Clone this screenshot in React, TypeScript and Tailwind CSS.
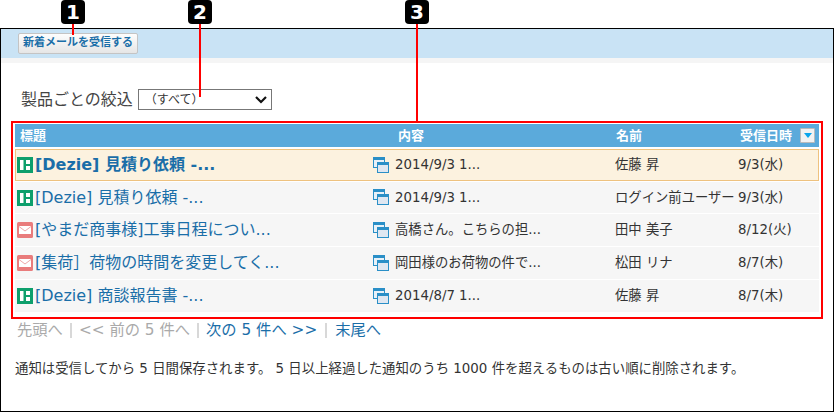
const font = "[font-family:'DejaVu_Sans','Noto_Sans_CJK_JP',sans-serif]";

type Row = {
  icon: "app" | "mail";
  title: string;
  body: string;
  name: string;
  date: string;
};

const rows: Row[] = [
  { icon: "app", title: "[Dezie] 見積り依頼 -...", body: "2014/9/3 1...", name: "佐藤 昇", date: "9/3(水)" },
  { icon: "app", title: "[Dezie] 見積り依頼 -...", body: "2014/9/3 1...", name: "ログイン前ユーザー", date: "9/3(水)" },
  { icon: "mail", title: "[やまだ商事様]工事日程につい...", body: "高橋さん。こちらの担...", name: "田中 美子", date: "8/12(火)" },
  { icon: "mail", title: "[集荷］荷物の時間を変更してく...", body: "岡田様のお荷物の件で...", name: "松田 リナ", date: "8/7(木)" },
  { icon: "app", title: "[Dezie] 商談報告書 -...", body: "2014/8/7 1...", name: "佐藤 昇", date: "8/7(木)" },
];

function AppIcon() {
  return (
    <svg width="16" height="16" viewBox="0 0 16 16" className="shrink-0">
      <rect width="16" height="16" fill="#0d9f6c" />
      <rect x="3" y="3" width="3.5" height="10" fill="#fff" />
      <rect x="9" y="3" width="4" height="4" fill="#fff" />
      <rect x="9" y="9" width="4" height="4" fill="#fff" />
    </svg>
  );
}

function MailIcon() {
  return (
    <svg width="16" height="16" viewBox="0 0 16 16" className="shrink-0">
      <rect width="16" height="16" rx="1.5" fill="#e97c7c" />
      <path d="M2 4h12v8H2z" fill="#fff" />
      <path d="M2 4.5l6 4.5 6-4.5" fill="none" stroke="#f0a8a8" strokeWidth="1" />
    </svg>
  );
}

function WindowIcon() {
  return (
    <svg width="16" height="16" viewBox="0 0 16 16" className="shrink-0">
      <rect x="0.5" y="0.5" width="11" height="10" fill="#e8f1f8" stroke="#2a8fc7" />
      <rect x="0" y="0" width="12" height="3" fill="#2a8fc7" />
      <rect x="4.5" y="5.5" width="11" height="10" fill="#dfe7f1" stroke="#2a8fc7" />
      <rect x="4" y="5" width="12" height="3" fill="#2a8fc7" />
    </svg>
  );
}

function Badge({ n, className }: { n: number; className: string }) {
  return (
    <div className={"absolute top-0 flex flex-col items-center " + className}>
      <div className="flex h-6 w-6 items-center justify-center rounded-[4px] bg-black text-[20px] font-bold leading-none text-white">
        {n}
      </div>
    </div>
  );
}

export default function App() {
  return (
    <div className={"relative h-[412px] w-[834px] overflow-hidden bg-white pt-[28px] text-[#333] " + font}>
      {/* Annotation markers */}
      <Badge n={1} className="left-[61px]" />
      <Badge n={2} className="left-[188px]" />
      <Badge n={3} className="left-[405px]" />
      <div className="absolute left-[72px] top-[24px] h-[11px] w-[2px] bg-[#f00]" />
      <div className="absolute left-[199px] top-[24px] h-[73px] w-[2px] bg-[#f00]" />
      <div className="absolute left-[416px] top-[24px] h-[98px] w-[2px] bg-[#f00]" />

      <div className="flex h-[384px] flex-col border border-b-0 border-black">
        {/* Toolbar */}
        <div className="flex h-[29px] items-start bg-[#c9e3f5] pl-[17px] pt-[4px]">
          <button
            type="button"
            className="flex h-[21px] w-[120px] items-center justify-center whitespace-nowrap rounded-[2px] border border-[#c4c4c4] bg-gradient-to-b from-[#fdfdfd] to-[#e6e6e6] text-[11px] font-bold text-[#1a6ea8]"
          >
            新着メールを受信する
          </button>
        </div>
        <div className="h-[5px] bg-[#f5f5f5]" />

        {/* Filter */}
        <div className="mt-[26px] flex h-[21px] items-center pl-[20px]">
          <span className="text-[16px] text-[#444]">製品ごとの絞込</span>
          <div className="ml-[5px] flex h-[21px] w-[134px] items-center justify-between border border-[#777] bg-white pl-[6px] pr-[4px] text-[12px]">
            <span>（すべて）</span>
            <svg width="12" height="8" viewBox="0 0 12 8">
              <path d="M1 1l5 5 5-5" fill="none" stroke="#111" strokeWidth="2.2" />
            </svg>
          </div>
        </div>

        {/* Notification list */}
        <div className="ml-[10px] mt-[11px] h-[198px] w-[812px] border-2 border-[#f00] px-[2px] pt-[1px]">
          <div className="flex h-[23px] items-center bg-[#5baadb] pr-[4px] text-[13px] font-bold text-white">
            <div className="w-[357px] pl-[5px]">標題</div>
            <div className="w-[243px] pl-[26px]">内容</div>
            <div className="w-[124px] pl-[1px]">名前</div>
            <div className="flex flex-1 items-center justify-end gap-[8px]">
              <span>受信日時</span>
              <span className="flex h-[15px] w-[15px] items-center justify-center rounded-[1px] border border-[#bbb] bg-[#f2f2f2]">
                <svg width="8" height="5" viewBox="0 0 8 5">
                  <path d="M0 0h8L4 5z" fill="#0aa5ec" />
                </svg>
              </span>
            </div>
          </div>
          <div className="mt-[2px] flex flex-col gap-[1px]">
            {rows.map((row, i) => (
              <div
                key={i}
                className={
                  "flex items-center text-[13.33px] " +
                  (i === 0
                    ? "h-[32px] border border-[#eec27f] bg-[#fcf2df] pl-[1px]"
                    : "bg-[#f6f6f6] pl-[2px] " + (i === 1 ? "h-[31px]" : "h-[32px]"))
                }
              >
                <div className="flex w-[356px] items-center gap-[2px]">
                  {row.icon === "app" ? <AppIcon /> : <MailIcon />}
                  <span className={"whitespace-nowrap text-[16px] text-[#1a6ea8] " + (i === 0 ? "font-bold" : "")}>
                    {row.title}
                  </span>
                </div>
                <div className="flex w-[242px] items-center gap-[6px]">
                  <WindowIcon />
                  <span className="whitespace-nowrap">{row.body}</span>
                </div>
                <div className="w-[123px] whitespace-nowrap">{row.name}</div>
                <div className="whitespace-nowrap">{row.date}</div>
              </div>
            ))}
          </div>
        </div>

        {/* Pager */}
        <div className="flex items-center pl-[16px] pt-[1px] text-[15.3px] leading-[20px] text-[#aaa]">
          <span>先頭へ</span>
          <span className="mx-[7px] h-[15px] w-[2px] bg-[#d8d8d8]" />
          <span>&lt;&lt; 前の 5 件へ</span>
          <span className="mx-[7px] h-[15px] w-[2px] bg-[#d8d8d8]" />
          <span className="text-[#1a6ea8]">次の 5 件へ &gt;&gt;</span>
          <span className="mx-[8px] h-[15px] w-[2px] bg-[#d8d8d8]" />
          <span className="text-[#1a6ea8]">末尾へ</span>
        </div>

        <p className="pl-[14px] pt-[19px] text-[13.4px] whitespace-nowrap text-[#333]">
          通知は受信してから 5 日間保存されます。 5 日以上経過した通知のうち 1000 件を超えるものは古い順に削除されます。
        </p>
      </div>
      <div className="absolute bottom-0 left-0 h-px w-full bg-black" />
    </div>
  );
}
